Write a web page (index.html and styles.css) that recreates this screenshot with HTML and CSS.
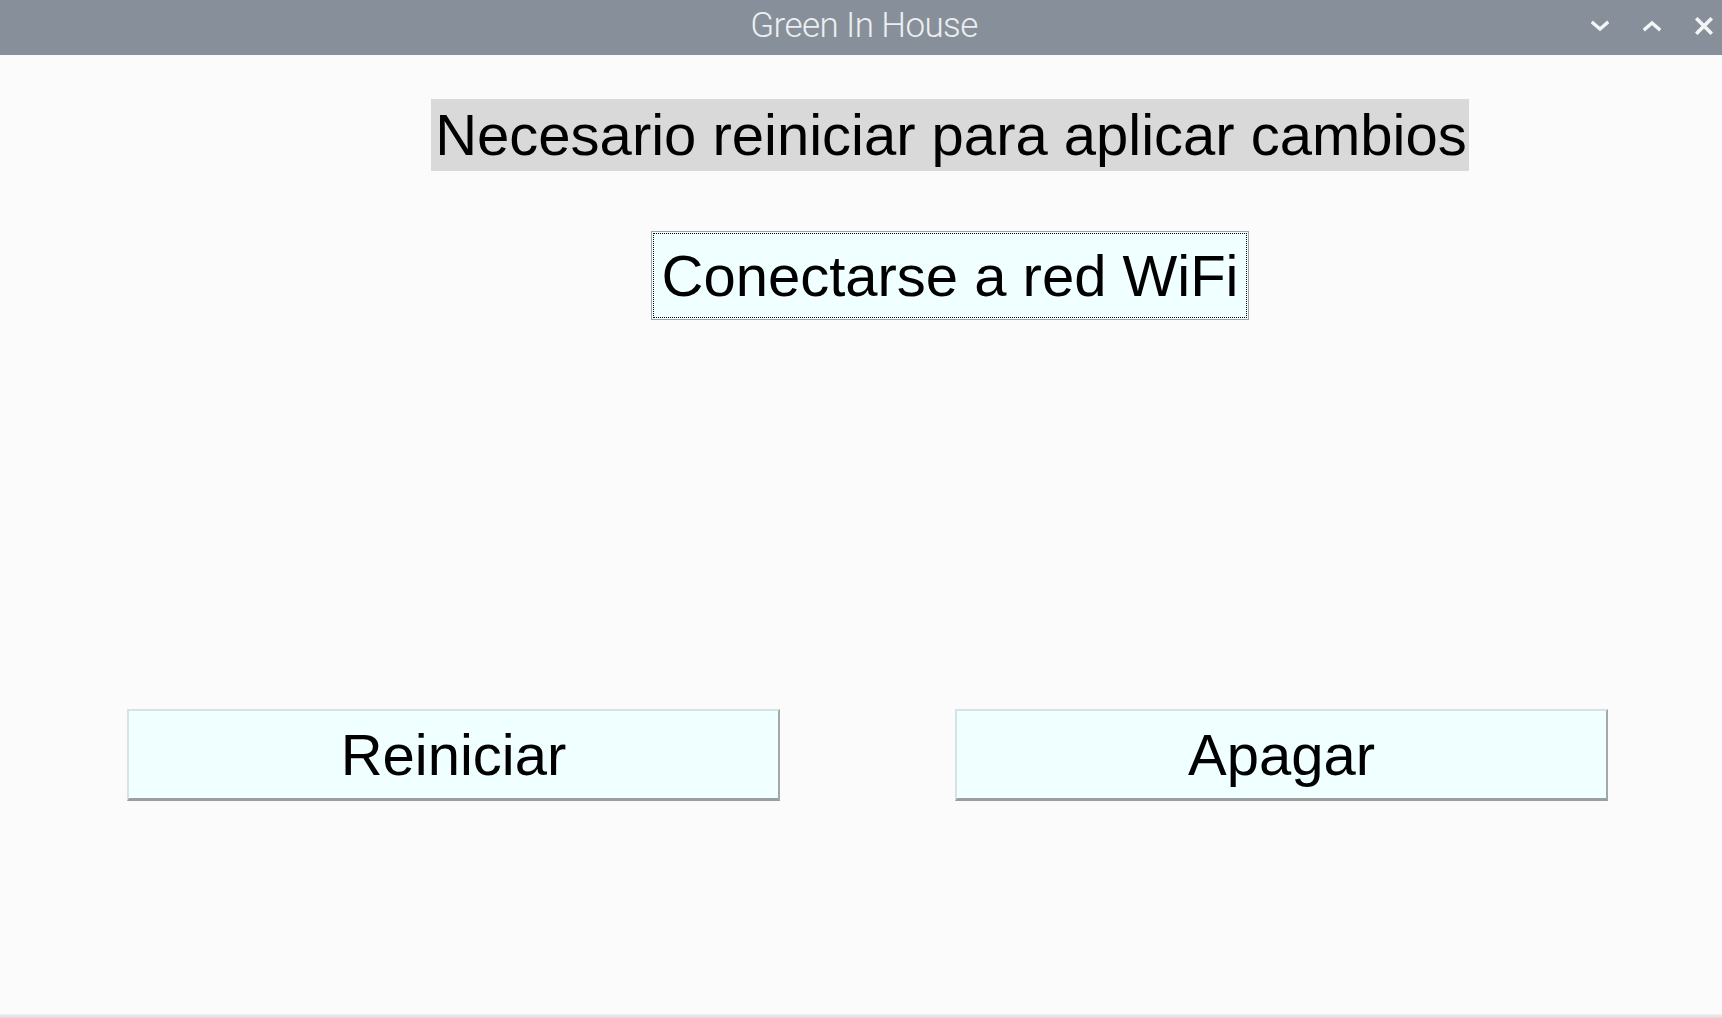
FILE: index.html
```html
<!DOCTYPE html>
<html lang="es">
<head>
<meta charset="utf-8">
<title>Green In House</title>
<link rel="stylesheet" href="styles.css">
</head>
<body>
<div class="window">
  <header class="titlebar">
    <div class="title">Green In House</div>
    <div class="controls">
      <svg class="ctl" width="18" height="14" viewBox="0 0 18 14"><path d="M2 4 L9 10 L16 4" fill="none" stroke="#f4f5f6" stroke-width="3.4" stroke-linecap="square"/></svg>
      <svg class="ctl" width="18" height="14" viewBox="0 0 18 14"><path d="M2 10 L9 4 L16 10" fill="none" stroke="#f4f5f6" stroke-width="3.4" stroke-linecap="square"/></svg>
      <svg class="ctl" width="18" height="18" viewBox="0 0 18 18"><path d="M2.5 2.5 L15.5 15.5 M15.5 2.5 L2.5 15.5" fill="none" stroke="#f4f5f6" stroke-width="3.6" stroke-linecap="square"/></svg>
    </div>
  </header>
  <main class="content">
    <div class="top">
      <div class="notice">Necesario reiniciar para aplicar cambios</div>
      <button class="btn wifi">Conectarse a red WiFi</button>
    </div>
    <div class="actions">
      <button class="btn big">Reiniciar</button>
      <button class="btn big">Apagar</button>
    </div>
  </main>
  <div class="bottom-edge"></div>
</div>
</body>
</html>
```
FILE: styles.css
```css
* { box-sizing: border-box; }
html, body { margin: 0; padding: 0; }
body {
  width: 1722px;
  height: 1018px;
  overflow: hidden;
  background: #fbfbfb;
  font-family: "Liberation Sans", Arial, sans-serif;
}
.window {
  display: flex;
  flex-direction: column;
  height: 1018px;
}
.titlebar {
  height: 55px;
  flex: 0 0 55px;
  background: #87909a;
  display: flex;
  align-items: center;
  justify-content: center;
  position: relative;
}
.title {
  font-family: Roboto, "Noto Sans", sans-serif;
  font-weight: 300;
  font-size: 35px;
  color: #eceef0;
  letter-spacing: -0.6px;
  margin-left: 6px;
  margin-bottom: 4px;
}
.controls {
  position: absolute;
  right: 9px;
  top: 17px;
  display: flex;
  align-items: center;
  gap: 34px;
}
.content {
  flex: 1;
  display: flex;
  flex-direction: column;
}
.top {
  display: flex;
  flex-direction: column;
  align-items: center;
  padding-left: 178px;
  padding-top: 44px;
}
.notice {
  background: #d9d9d9;
  color: #000;
  font-size: 58px;
  height: 72px;
  line-height: 72px;
  padding: 0 2px 0 4px;
}
.btn {
  font-family: "Liberation Sans", Arial, sans-serif;
  font-size: 58px;
  color: #000;
  background: #f0ffff;
  margin: 0;
  cursor: pointer;
}
.wifi {
  margin-top: 60px;
  width: 598px;
  height: 89px;
  padding: 0;
  border: 1px solid #9da3a6;
  outline: 1px dotted #000;
  outline-offset: -3px;
}
.actions {
  display: flex;
  gap: 175px;
  padding-left: 127px;
  margin-top: 389px;
}
.big {
  width: 653px;
  height: 92px;
  padding: 0;
  border-style: solid;
  border-width: 2px 2px 3px 2px;
  border-color: #d6e3e3 #a3a9aa #9aa0a0 #d6e3e3;
}
.bottom-edge {
  height: 4px;
  flex: 0 0 4px;
  background: linear-gradient(#f0f0f0, #dcdcdc);
}
```
